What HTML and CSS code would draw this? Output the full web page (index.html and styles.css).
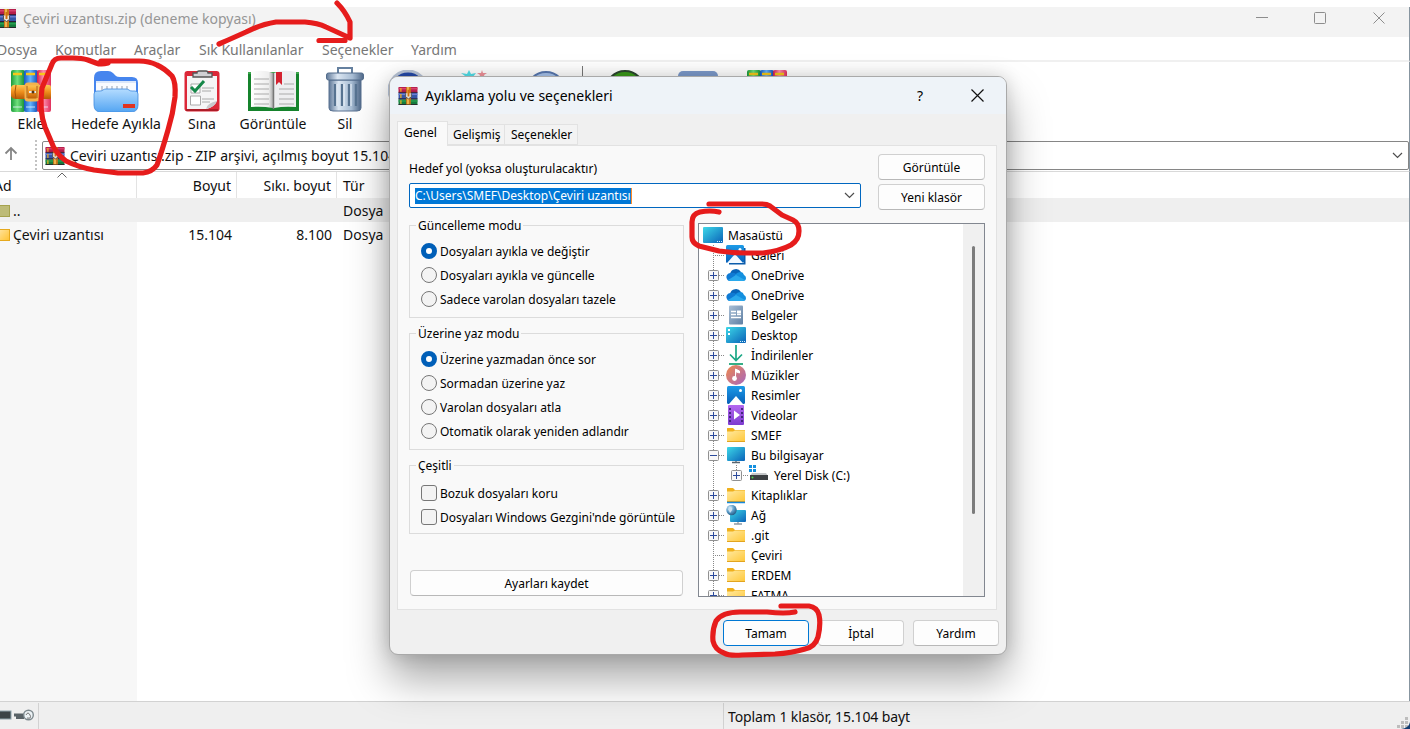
FILE: index.html
```
<!DOCTYPE html>
<html lang="tr">
<head>
<meta charset="utf-8">
<title>Çeviri uzantısı.zip</title>
<link rel="stylesheet" href="styles.css">
</head>
<body>
<svg class="defs" width="0" height="0">
  <defs>
    <linearGradient id="gDesk" x1="0" y1="0" x2="1" y2="1"><stop offset="0" stop-color="#3dd8e8"/><stop offset="1" stop-color="#0a62b8"/></linearGradient>
    <linearGradient id="gFold" x1="0" y1="0" x2="1" y2="1"><stop offset="0" stop-color="#ffe9a0"/><stop offset="1" stop-color="#ffc83a"/></linearGradient>
    <linearGradient id="gBlue" x1="0" y1="0" x2="0" y2="1"><stop offset="0" stop-color="#1c9be8"/><stop offset="1" stop-color="#0860b8"/></linearGradient>
    <linearGradient id="gMusic" x1="0" y1="0" x2="1" y2="1"><stop offset="0" stop-color="#f0884a"/><stop offset="1" stop-color="#a667c0"/></linearGradient>
    <linearGradient id="gVid" x1="0" y1="0" x2="0" y2="1"><stop offset="0" stop-color="#b468f0"/><stop offset="1" stop-color="#7d3cd0"/></linearGradient>
    <linearGradient id="gDoc" x1="0" y1="0" x2="1" y2="1"><stop offset="0" stop-color="#a8bfd6"/><stop offset="1" stop-color="#5f7fa3"/></linearGradient>
    <linearGradient id="gBelt" x1="0" y1="0" x2="0" y2="1"><stop offset="0" stop-color="#ffca55"/><stop offset=".5" stop-color="#ee8e1c"/><stop offset="1" stop-color="#b85a08"/></linearGradient>
    <linearGradient id="gG" x1="0" y1="0" x2="1" y2="0"><stop offset="0" stop-color="#1c9a3a"/><stop offset=".45" stop-color="#6fe07c"/><stop offset="1" stop-color="#128a30"/></linearGradient>
    <linearGradient id="gB" x1="0" y1="0" x2="1" y2="0"><stop offset="0" stop-color="#1558c0"/><stop offset=".45" stop-color="#63b4ff"/><stop offset="1" stop-color="#124ab0"/></linearGradient>
    <linearGradient id="gR" x1="0" y1="0" x2="1" y2="0"><stop offset="0" stop-color="#d51e4a"/><stop offset=".45" stop-color="#ff8fae"/><stop offset="1" stop-color="#e0305c"/></linearGradient>
    <linearGradient id="gHf" x1="0" y1="0" x2="0" y2="1"><stop offset="0" stop-color="#b4dcff"/><stop offset="1" stop-color="#54a5f2"/></linearGradient>
    <linearGradient id="gBin" x1="0" y1="0" x2="1" y2="0"><stop offset="0" stop-color="#5f7898"/><stop offset=".3" stop-color="#dbe6f2"/><stop offset=".7" stop-color="#a8bdd4"/><stop offset="1" stop-color="#4f6888"/></linearGradient>
    <linearGradient id="gPage" x1="0" y1="0" x2="1" y2="0"><stop offset="0" stop-color="#fff"/><stop offset=".8" stop-color="#eee"/><stop offset="1" stop-color="#aaa"/></linearGradient>
    <radialGradient id="gGlobe" cx=".35" cy=".3" r=".8"><stop offset="0" stop-color="#d8ecfa"/><stop offset=".5" stop-color="#5b9cc8"/><stop offset="1" stop-color="#1b5078"/></radialGradient>
  </defs>
  <symbol id="rar" viewBox="0 0 20 19">
    <rect width="20" height="6" fill="#b51f4c"/><rect y="1" width="20" height="1.5" fill="#d8406c"/>
    <rect y="6" width="20" height="7" fill="#3556a8"/><rect y="7" width="20" height="1.5" fill="#6c7fd0"/>
    <rect y="13" width="20" height="6" fill="#157a3c"/><rect y="14" width="20" height="1.5" fill="#28a050"/>
    <path d="M0 5.7h20M0 12.5h20M0 18.6h20" stroke="#2c1428" stroke-width=".9"/>
    <path d="M2.5 1v4M2.5 7.5v4M2.5 14v4" stroke="#f0b020" stroke-width="1.3"/>
    <rect x="8" width="5" height="18.5" fill="#c87818"/><rect x="9" y="0" width="2" height="18" fill="#f0b44c"/>
    <path d="M7.5 6.5v4l3 2 3-2v-4" fill="#e9e4dc" stroke="#555" stroke-width="1"/><path d="M10.5 3v7" stroke="#d07010" stroke-width="2"/>
  </symbol>
  <symbol id="books" viewBox="0 0 40 42">
    <rect width="14" height="42" rx="2" fill="url(#gG)"/><rect x="13" width="14" height="42" rx="2" fill="url(#gB)"/><rect x="26" width="14" height="42" rx="2" fill="url(#gR)"/>
    <path d="M2 4h9M15 4h9M28 4h9" stroke="#f8c818" stroke-width="2.6"/><path d="M2 37h9M15 37h9M28 37h9" stroke="#e8f4ff" stroke-opacity=".4" stroke-width="2"/>
    <path d="M0 17q2-3 5-2h33q2 0 2 2v11q0 1-2 1H5q-4 0-5-3z" fill="url(#gBelt)"/><path d="M5 15q-2 7 0 14" stroke="#a85405" fill="none"/>
    <rect x="15" y="14" width="12" height="16" rx="2" fill="none" stroke="#f4b24c" stroke-width="3"/><path d="M16 16v12M26 16v12" stroke="#965010" stroke-width=".8"/>
    <path d="M18 22h7" stroke="#ececec" stroke-width="2"/><circle cx="22" cy="22" r="1.5" fill="#553010"/>
  </symbol>
  <symbol id="dest" viewBox="0 0 46 42">
    <path d="M1 8Q1 1 8 1h7q3 0 5 2l3 3q1 1 4 1h12q6 0 6 6v22H1z" fill="#4685ee"/><path d="M3 11h40v17H3z" fill="#f9fbff"/>
    <path d="M3 11h40v2H3z" fill="#dbe7fa"/><path d="M9 16v7M14 16v7M19 16v7M24 16v7M29 16v7M34 16v7" stroke="#b5bcc8" stroke-width="1.4"/>
    <path d="M1 24q0-3 3-3h3q2 0 3-1 1-1 3-1h20q2 0 3 1t3 1h3q3 0 3 3v11q0 7-7 7H8q-7 0-7-7z" fill="url(#gHf)" stroke="#3f8ae0" stroke-width=".8"/>
    <rect x="30" y="34" width="12" height="4" fill="#e13320"/>
  </symbol>
  <symbol id="clip" viewBox="0 0 36 42">
    <rect x=".5" y="1" width="35" height="40.5" rx="3" fill="#dc2838"/><path d="M2 40h32" stroke="#9e1822" stroke-width="1.5"/>
    <path d="M3 6h30v25q-3 6-10 8H3z" fill="#f5f5f6"/><path d="M22 39q1-6 11-8-2 6-11 8" fill="#c8c8cc"/>
    <path d="M9 7V3h4q0-2 2-2h7q2 0 2 2h4v4z" fill="#d0d0d4" stroke="#555" stroke-width="1.3"/>
    <path d="M7 14h9v9H7zM6.500 26h10v9h-10z" fill="#fff" stroke="#aaa"/><path d="M7 17l4 4 9-10" fill="none" stroke="#16884a" stroke-width="3"/>
    <path d="M18 18h12M18 21h9M18 29h12M18 32h8" stroke="#aaa"/>
  </symbol>
  <symbol id="book" viewBox="0 0 51 42">
    <path d="M0 2h51v39H0z" fill="#15832c"/><path d="M0 2h51v2H0z" fill="#3da64d"/>
    <path d="M3 2q12-3 22 1v35q-11-2-22-1z" fill="url(#gPage)"/><path d="M26 3q10-4 22-1v35q-12-1-22 1z" fill="#eeeef0"/><path d="M25.500 3v36" stroke="#777" stroke-width="1.5"/>
    <path d="M6 9h15M6 14h15M6 19h15M6 24h15M6 29h15M6 34h15M31 19h15M31 24h15M31 29h15M31 34h15M36 14h10" stroke="#aaa"/>
    <path d="M28 2h6v13l-3-3-3 3z" fill="#d42230"/>
  </symbol>
  <symbol id="bin" viewBox="0 0 38 45">
    <path d="M12 6V1h14v5" fill="none" stroke="#65809f" stroke-width="2"/><path d="M3 13h32v28q0 3-4 3H7q-4 0-4-3z" fill="url(#gBin)" stroke="#587090"/>
    <path d="M9 17v22M16 17v22M23 17v22M30 17v22" stroke="#577391" stroke-width="2.300"/><path d="M11 17v22M18 17v22M25 17v22" stroke="#f0f6fc" stroke-width="1"/>
    <rect x=".5" y="6" width="37" height="7" rx="2" fill="url(#gBin)" stroke="#536d8c"/>
  </symbol>
  <symbol id="plus" viewBox="0 0 11 11"><rect x=".5" y=".5" width="10" height="10" rx="1" fill="#f8f8f8" stroke="#919191"/><path d="M2 5.500h7M5.500 2v7" stroke="#2b4a9b"/></symbol>
  <symbol id="minus" viewBox="0 0 11 11"><rect x=".5" y=".5" width="10" height="10" rx="1" fill="#f8f8f8" stroke="#919191"/><path d="M2 5.500h7" stroke="#2b4a9b"/></symbol>
  <symbol id="root" viewBox="0 0 20 20"><rect y="2" width="20" height="16" rx="1" fill="url(#gDesk)"/><path d="M14 16.500h1M16 16.500h1M18 16.500h1" stroke="#d6f0ff"/></symbol>
  <symbol id="desk" viewBox="0 0 20 20"><rect y="2" width="20" height="16" rx="1" fill="url(#gDesk)"/><path d="M2 4h2v2H2zM2 8h2v2H2z" fill="#fff"/><path d="M14 16.500h1M16 16.500h1M18 16.500h1" stroke="#d6f0ff"/></symbol>
  <symbol id="gal" viewBox="0 0 20 20"><path d="M18 3h1.500v16.500H3V18h15z" fill="#0b5cab"/><rect width="18" height="18" rx="1.500" fill="url(#gBlue)"/><path d="M1 18l8-9 8 9z" fill="#f2f9ff"/><circle cx="14" cy="4.500" r="1.500" fill="#fff"/></symbol>
  <symbol id="cloud" viewBox="0 0 20 20"><path d="M4 9a6 6 0 0 1 11-2l-3 6z" fill="#0864b8"/><path d="M1 14a4 4 0 0 1 4-6q3-1 5 1l4 3-9 4H3q-2-1-2-2" fill="#0f7ad4"/><path d="M9 10q2-3 6-3 2 0 3 3 2 1 2 3 0 3-3 3h-8z" fill="#1490df"/><path d="M2 15l8-5 9 5q-1 1-3 1H5q-2 0-3-1" fill="#2aa9ec"/></symbol>
  <symbol id="doc" viewBox="0 0 20 20"><rect x="3" y=".5" width="14" height="19" rx="1" fill="url(#gDoc)"/><path d="M5 6.500h5M5 9.500h5M5 12.500h10M11 9.500h4" stroke="#fff" stroke-width="1.400"/><rect x="11" y="5.500" width="4" height="3" fill="#fff"/></symbol>
  <symbol id="down" viewBox="0 0 20 20"><path d="M10 0v15M4 9.500l6 6 6-6" fill="none" stroke="#1ca886" stroke-width="1.700"/><path d="M3 19h14" stroke="#12a071" stroke-width="1.700"/></symbol>
  <symbol id="music" viewBox="0 0 20 20"><circle cx="10" cy="10" r="10" fill="url(#gMusic)"/><path d="M9.500 13V4l4 2v2l-3-1" fill="#fff" stroke="#fff"/><circle cx="8.500" cy="13.500" r="2.400" fill="#fff"/></symbol>
  <symbol id="pic" viewBox="0 0 20 20"><rect x="1" y="1" width="18" height="18" rx="1.500" fill="url(#gBlue)"/><path d="M3 19l7-8 7 8z" fill="#fff"/><circle cx="14.500" cy="5.500" r="1.500" fill="#fff"/></symbol>
  <symbol id="video" viewBox="0 0 20 20"><rect x="2" y="0" width="16" height="20" rx="1" fill="url(#gVid)"/><path d="M4 3v15M16 3v15" stroke="#35206b" stroke-width="1.700" stroke-dasharray="2 2"/><path d="M8 5.500l6 4.500-6 4.500z" fill="#fff"/></symbol>
  <symbol id="fold" viewBox="0 0 20 20"><path d="M1 3.500q0-.5.5-.5H7l2 2h10v11H1z" fill="#efb01c"/><path d="M1 6.500h6l2-1h10v11H1z" fill="url(#gFold)"/><path d="M1 16.500h18" stroke="#e2a420"/></symbol>
  <symbol id="lib" viewBox="0 0 20 20"><use href="#fold"/><path d="M1 17.500h18" stroke="#1689dc" stroke-width="1.500"/></symbol>
  <symbol id="pc" viewBox="0 0 20 20"><rect x="1" y="2" width="18" height="14" rx="1" fill="url(#gDesk)"/><path d="M10 16v1.500M6 17.500h8" stroke="#58656f" stroke-width="1.300"/></symbol>
  <symbol id="disk" viewBox="0 0 20 20"><path d="M0 0h3v3H0zM4 0h3v3H4zM0 4h3v3H0zM4 4h3v3H4z" fill="#1490df"/><path d="M3 8h14l2 3H1z" fill="#c4c7c9"/><rect x="1" y="10" width="18" height="5" fill="#3c4043"/><circle cx="3.500" cy="12.500" r="1" fill="#4dd84a"/></symbol>
  <symbol id="net" viewBox="0 0 20 20"><rect x="4" y="5" width="16" height="12" rx="1" fill="url(#gDesk)"/><path d="M12 17v2M8 19h8" stroke="#8b98a4" stroke-width="1.300"/><circle cx="5.500" cy="5" r="5.200" fill="url(#gGlobe)"/><path d="M2 4q3-3 4-1t-2 5" fill="#c9e1f2"/></symbol>
</svg>

<div class="window">
  <header class="titlebar">
    <svg class="title-icon" width="20" height="19"><use href="#rar"/></svg>
    <span class="title">Çeviri uzantısı.zip (deneme kopyası)</span>
    <svg class="caption" width="160" height="14" viewBox="0 0 160 14" fill="none" stroke="#8d8d8d"><path d="M2 6.500h12"/><rect x="60.500" y="1.500" width="11" height="11" rx="1"/><path d="M119.500 1.500l11 11M130.500 1.500l-11 11"/></svg>
  </header>
  <nav class="menu"><span class="m1">Dosya</span><span class="m2">Komutlar</span><span class="m3">Araçlar</span><span class="m4">Sık Kullanılanlar</span><span class="m5">Seçenekler</span><span class="m6">Yardım</span></nav>
  <div class="toolbar">
    <div class="tool w-add"><svg width="40" height="42"><use href="#books"/></svg><span>Ekle</span></div>
    <div class="tool w-dest"><svg width="46" height="42"><use href="#dest"/></svg><span>Hedefe Ayıkla</span></div>
    <div class="tool w-test"><svg width="36" height="42"><use href="#clip"/></svg><span>Sına</span></div>
    <div class="tool w-view"><svg width="51" height="42"><use href="#book"/></svg><span>Görüntüle</span></div>
    <div class="tool w-del"><svg class="bin" width="38" height="45"><use href="#bin"/></svg><span>Sil</span></div>
    <div class="tool w-find"><svg width="40" height="42" viewBox="0 0 40 42"><circle cx="20" cy="20" r="19" fill="#2449a8" stroke="#b9c5d8" stroke-width="3"/></svg></div>
    <div class="tool w-wiz"><svg width="40" height="42" viewBox="0 0 40 42"><path d="M10 0l2 4 5-1-3 4 2 4-6-2-5 2 1-5-4-3 6 1z" fill="#52e0ea"/><path d="M23 0l1 3 4 0-3 2 1 3-3-2-3 2 1-3-3-2h4z" fill="#f0929b"/></svg></div>
    <div class="tool w-info"><svg width="40" height="42" viewBox="0 0 40 42"><circle cx="20" cy="21" r="19" fill="#a8c4ec" stroke="#5878b0" stroke-width="2"/></svg></div>
    <div class="tool-sep"></div>
    <div class="tool w-virus"><svg width="40" height="42" viewBox="0 0 40 42"><circle cx="20" cy="20" r="19" fill="#3a9a1a" stroke="#2c4630" stroke-width="2"/></svg></div>
    <div class="tool w-comment"><svg width="40" height="42" viewBox="0 0 40 42"><rect y="1" width="40" height="34" rx="5" fill="#7c9acb"/></svg></div>
    <div class="tool w-sfx"><svg width="40" height="42"><use href="#books"/></svg></div>
  </div>
  <div class="address">
    <svg class="up" width="16" height="16" viewBox="0 0 16 16"><path d="M8 14V2M2.500 7.500L8 2l5.500 5.500" fill="none" stroke="#858585" stroke-width="1.800"/></svg>
    <div class="grip"></div>
    <div class="path"><svg width="20" height="18"><use href="#rar"/></svg><span>Çeviri uzantısı.zip - ZIP arşivi, açılmış boyut 15.104 bayt</span>
      <svg class="chev" width="11" height="7" viewBox="0 0 11 7"><path d="M1 1l4.500 4.500L10 1" fill="none" stroke="#4d4d4d" stroke-width="1.200"/></svg></div>
  </div>
  <main class="list">
    <div class="row head"><span class="name">Ad<svg class="sort" width="10" height="6" viewBox="0 0 10 6"><path d="M.5 5.500L5 1l4.500 4.500" fill="none" stroke="#666"/></svg></span><span class="size">Boyut</span><span class="packed">Sıkı. boyut</span><span class="type">Tür</span></div>
    <div class="row parent"><span class="name"><i class="ficon old"></i>..</span><span class="size"></span><span class="packed"></span><span class="type">Dosya</span></div>
    <div class="row"><span class="name"><i class="ficon"></i>Çeviri uzantısı</span><span class="size">15.104</span><span class="packed">8.100</span><span class="type">Dosya</span></div>
    <div class="rest"></div>
  </main>
  <footer class="status">
    <div class="cell lock"><svg width="36" height="14" viewBox="0 0 36 14"><rect x="-1" y="3" width="12" height="8" fill="#3b4448" stroke="#8fa4ad"/><path d="M14 7h10M16 9.500h8" stroke="#596267" stroke-width="3"/><circle cx="28.500" cy="7" r="4.800" fill="#edf3f6" stroke="#7d898e" stroke-width="1.400"/><path d="M26 7q2-4 4 0t-3 3" fill="none" stroke="#777"/></svg></div>
    <div class="cell msg"></div>
    <div class="cell total">Toplam 1 klasör, 15.104 bayt</div>
    <svg class="resize" width="14" height="12" viewBox="0 0 14 12"><path d="M9 0h3v3H9zM5 4h3v3H5zM9 4h3v3H9zM1 8h3v3H1zM5 8h3v3H5zM9 8h3v3H9z" fill="#bdbdbd"/><path d="M14 5q-1 6-9 7h9z" fill="#123c70"/></svg>
  </footer>
</div>

<section class="dialog">
  <header class="dlg-title"><svg width="20" height="18"><use href="#rar"/></svg><span>Ayıklama yolu ve seçenekleri</span><b>?</b><svg class="close" width="13" height="13" viewBox="0 0 13 13"><path d="M.5.5l12 12M12.500.5l-12 12" stroke="#111" stroke-width="1.200"/></svg></header>
  <div class="tabs"><span class="tab on">Genel</span><span class="tab t2">Gelişmiş</span><span class="tab t3">Seçenekler</span></div>
  <div class="page">
    <div class="dest-row">
      <div class="dest"><label>Hedef yol (yoksa oluşturulacaktır)</label>
        <div class="combo"><span class="sel">C:\Users\SMEF\Desktop\Çeviri uzantısı</span><svg width="11" height="7" viewBox="0 0 11 7"><path d="M1 1l4.500 4.500L10 1" fill="none" stroke="#4d4d4d" stroke-width="1.200"/></svg></div></div>
      <div class="side"><button>Görüntüle</button><button>Yeni klasör</button></div>
    </div>
    <div class="columns">
      <div class="options">
        <fieldset class="g1"><legend>Güncelleme modu</legend>
          <label class="opt"><i class="radio on"></i>Dosyaları ayıkla ve değiştir</label><label class="opt"><i class="radio"></i>Dosyaları ayıkla ve güncelle</label><label class="opt"><i class="radio"></i>Sadece varolan dosyaları tazele</label></fieldset>
        <fieldset class="g2"><legend>Üzerine yaz modu</legend>
          <label class="opt"><i class="radio on"></i>Üzerine yazmadan önce sor</label><label class="opt"><i class="radio"></i>Sormadan üzerine yaz</label><label class="opt"><i class="radio"></i>Varolan dosyaları atla</label><label class="opt"><i class="radio"></i>Otomatik olarak yeniden adlandır</label></fieldset>
        <fieldset class="g3"><legend>Çeşitli</legend>
          <label class="opt"><i class="check"></i>Bozuk dosyaları koru</label><label class="opt"><i class="check"></i>Dosyaları Windows Gezgini'nde görüntüle</label></fieldset>
        <button class="save">Ayarları kaydet</button>
      </div>
      <div class="tree">
        <div class="nodes">
          <div class="node top"><svg class="ni"><use href="#root"/></svg>Masaüstü</div>
          <div class="node"><i class="ex"></i><svg class="ni"><use href="#gal"/></svg>Galeri</div>
          <div class="node"><svg class="ex"><use href="#plus"/></svg><svg class="ni"><use href="#cloud"/></svg>OneDrive</div>
          <div class="node"><svg class="ex"><use href="#plus"/></svg><svg class="ni"><use href="#cloud"/></svg>OneDrive</div>
          <div class="node"><svg class="ex"><use href="#plus"/></svg><svg class="ni"><use href="#doc"/></svg>Belgeler</div>
          <div class="node"><svg class="ex"><use href="#plus"/></svg><svg class="ni"><use href="#desk"/></svg>Desktop</div>
          <div class="node"><svg class="ex"><use href="#plus"/></svg><svg class="ni"><use href="#down"/></svg>İndirilenler</div>
          <div class="node"><svg class="ex"><use href="#plus"/></svg><svg class="ni"><use href="#music"/></svg>Müzikler</div>
          <div class="node"><svg class="ex"><use href="#plus"/></svg><svg class="ni"><use href="#pic"/></svg>Resimler</div>
          <div class="node"><svg class="ex"><use href="#plus"/></svg><svg class="ni"><use href="#video"/></svg>Videolar</div>
          <div class="node"><svg class="ex"><use href="#plus"/></svg><svg class="ni"><use href="#fold"/></svg>SMEF</div>
          <div class="node"><svg class="ex"><use href="#minus"/></svg><svg class="ni"><use href="#pc"/></svg>Bu bilgisayar</div>
          <div class="node deep"><svg class="ex"><use href="#plus"/></svg><svg class="ni"><use href="#disk"/></svg>Yerel Disk (C:)</div>
          <div class="node"><svg class="ex"><use href="#plus"/></svg><svg class="ni"><use href="#lib"/></svg>Kitaplıklar</div>
          <div class="node"><svg class="ex"><use href="#plus"/></svg><svg class="ni"><use href="#net"/></svg>Ağ</div>
          <div class="node"><svg class="ex"><use href="#plus"/></svg><svg class="ni"><use href="#fold"/></svg>.git</div>
          <div class="node"><i class="ex"></i><svg class="ni"><use href="#fold"/></svg>Çeviri</div>
          <div class="node"><svg class="ex"><use href="#plus"/></svg><svg class="ni"><use href="#fold"/></svg>ERDEM</div>
          <div class="node"><svg class="ex"><use href="#plus"/></svg><svg class="ni"><use href="#fold"/></svg>FATMA</div>
        </div>
        <div class="scroll"><i></i></div>
      </div>
    </div>
  </div>
  <div class="actions"><button class="ok">Tamam</button><button>İptal</button><button>Yardım</button></div>
</section>

<svg class="ink" width="1410" height="729" viewBox="0 0 1410 729" fill="none" stroke="#e61c1c" stroke-width="5.200" stroke-linecap="round" stroke-linejoin="round">
  <path d="M219 44Q235 37 246 32Q262 24 276 22H305Q318 23 326 27L350 38M337 3Q345 11 350 22V38M319 40.500H345"/>
  <path d="M108 63Q101 65 96 63L88 60Q82 58 73 58H61Q54 58 52 64Q47 76 42 88Q39 111 45 127L51 141Q55 153 66 161Q78 167 94 170L118 173H143Q152 172 157 165Q162 151 168 130Q173 114 175 97Q176 82 172 76Q164 68 157 65Q149 61 139 61H101"/>
  <path d="M719 212Q710 210 700 212Q692 214 692 222V237Q692 243 699 246L719 251Q733 253 746 253H763Q780 251 791 245Q799 240 799 231Q799 223 793 220L782 215L770 206Q767 204 762 204H709"/>
  <path d="M795 612Q785 614 767 612H740Q722 612 716 621Q712 630 713 641Q715 650 724 653Q729 656 742 655L775 654Q792 653 805 649Q815 647 818 637Q821 624 819 615Q817 607 809 606H781"/>
</svg>
</body>
</html>
```
FILE: styles.css
```
* { box-sizing: border-box; }
body { margin: 0; width: 1410px; height: 729px; overflow: hidden; position: relative; background: #fff; font-family: "Noto Sans", sans-serif; font-size: 14px; color: #111; }
.defs { position: absolute; }
span, label, button, legend, .node, .cell { white-space: nowrap; }
svg { flex: none; }
.window { width: 1410px; height: 729px; padding-top: 7px; display: flex; flex-direction: column; }

.titlebar { height: 30px; flex: none; background: #f3f3f3; display: flex; align-items: flex-start; border-right: 1px solid #8795a0; color: #969696; line-height: 24px; }
.title-icon { margin: 2px 7px 0 -4px; }
.caption { margin: 4px 0 0 auto; margin-right: -5px; }
.menu { height: 25px; flex: none; border-bottom: 2px solid #f0f0f0; display: flex; line-height: 25px; color: #777; border-right: 1px solid #8795a0; }
.m1 { width: 58px; margin-left: -3px; }
.m2 { width: 79px; }
.m3 { width: 65px; }
.m4 { width: 123px; }
.m5 { width: 89px; }

.toolbar { height: 79px; flex: none; display: flex; padding-top: 8px; border-right: 1px solid #8795a0; }
.tool { display: flex; flex-direction: column; align-items: center; height: 66px; flex: none; }
.tool span { line-height: 20px; margin-top: 2px; }
.tool .bin { margin-top: -3px; }
.w-add { width: 62px; }
.w-dest { width: 108px; }
.w-test { width: 64px; }
.w-view { width: 78px; }
.w-del { width: 66px; }
.w-find { width: 60px; }
.w-wiz { width: 82px; }
.w-info { width: 52px; }
.tool-sep { width: 1px; height: 60px; background: #777; margin: -4px 12px 0 10px; }
.w-virus { width: 60px; }
.w-comment { width: 86px; }
.w-sfx { width: 52px; }

.address { height: 31px; flex: none; display: flex; border-bottom: 1px solid #d9d9d9; border-right: 1px solid #8795a0; }
.up { margin: 5px 0 0 3px; }
.grip { width: 2px; height: 30px; margin: -1px 5px 0 16px; background: repeating-linear-gradient(#c3c3c3 0 2px, #fff 2px 4px); }
.path { flex: 1; height: 29px; border: 1px solid #868686; border-radius: 2px; display: flex; align-items: center; padding: 0 5px 0 2px; }
.path span { margin-left: 5px; }
.chev { margin-left: auto; }

.list { flex: 1; display: flex; flex-direction: column; border-right: 1px solid #8795a0; }
.row { height: 24px; flex: none; display: flex; line-height: 25px; }
.row.head { height: 26px; line-height: 27px; }
.name { width: 137px; padding-left: 13px; background: #f7f7f7; display: flex; position: relative; }
.head .name { padding-left: 0; background: none; border-right: 1px solid #e3e3e3; text-indent: -6px; }
.sort { position: absolute; left: 57px; top: 0; }
.parent, .parent .name { background: #efefef; }
.ficon { width: 10px; height: 12px; margin: 7px 3px 0 -13px; flex: none; background: linear-gradient(135deg, #ffe196, #ffc437); border: 1px solid #e6a91e; border-left: 0; }
.ficon.old { background: #bdbb77; border-color: #a5a24d; }
.size, .packed { text-align: right; padding-right: 5px; }
.size { width: 100px; }
.packed { width: 100px; }
.head .size, .head .packed { border-right: 1px solid #e3e3e3; }
.type { padding-left: 6px; }
.rest { flex: 1; width: 137px; background: #f7f7f7; }

.status { height: 28px; flex: none; background: #efefef; border-top: 1px solid #d2d2d2; display: flex; position: relative; }
.cell { height: 26px; margin-top: 1px; line-height: 28px; }
.lock { width: 39px; border-right: 1px solid #d2d2d2; padding-top: 5px; line-height: 0; }
.msg { width: 685px; border-right: 1px solid #d2d2d2; }
.total { padding-left: 4px; letter-spacing: -.1px; }
.resize { position: absolute; right: 0; bottom: 0; }

.dialog { position: absolute; left: 389px; top: 76px; width: 618px; height: 579px; border-radius: 9px; background: #f0f0f0; border: 1px solid #a9a9a9; box-shadow: 0 24px 42px rgba(0,0,0,.34), 0 0 18px rgba(0,0,0,.16); font-size: 12px; color: #000; display: flex; flex-direction: column; overflow: hidden; }
.dlg-title { height: 37px; flex: none; background: #eef3f8; display: flex; align-items: center; padding: 0 22px 0 8px; font-size: 14px; }
.dlg-title span { margin-left: 7px; }
.dlg-title b { margin: 0 48px 0 auto; font-weight: 400; }
.tabs { height: 31px; flex: none; display: flex; align-items: flex-end; padding-left: 7px; position: relative; z-index: 1; }
.tab { height: 21px; border: 1px solid #e2e2e2; border-left: 0; background: #f3f3f3; line-height: 20px; padding-left: 5px; }
.tab.on { width: 51px; height: 25px; margin-bottom: -1px; border: 1px solid #e2e2e2; border-bottom: 0; background: #f9f9f9; padding-left: 6px; line-height: 22px; }
.t2 { width: 57px; }
.t3 { width: 73px; padding-left: 6px; }
.page { width: 600px; height: 465px; margin-left: 7px; flex: none; background: #f9f9f9; border: 1px solid #e2e2e2; padding: 8px 11px 0; display: flex; flex-direction: column; }
.dest-row { display: flex; justify-content: space-between; height: 56px; flex: none; }
.dest > label { display: block; height: 29px; line-height: 30px; }
.combo { width: 452px; height: 25px; border: 1px solid #0067c0; border-radius: 2px; background: #fff; display: flex; align-items: center; justify-content: space-between; padding: 0 5px; }
.sel { background: #0078d7; color: #fff; line-height: 16px; height: 16px; border-right: 1px solid #ff8b28; }
.side { width: 107px; display: flex; flex-direction: column; gap: 4px; }
button { font: inherit; height: 26px; flex: none; padding: 0; color: #000; background: #fdfdfd; border: 1px solid #d0d0d0; border-bottom-color: #b8b8b8; border-radius: 4px; text-align: center; }
.columns { display: flex; justify-content: space-between; padding-top: 13px; }
.options { width: 275px; padding-top: 2px; display: flex; flex-direction: column; }
fieldset { margin: 0; padding: 0 0 0 11px; border: 1px solid #dcdcdc; position: relative; min-width: 0; }
legend { position: absolute; left: 6px; top: -9px; padding: 0 2px; line-height: 17px; background: #f9f9f9; }
.g1 { height: 93px; padding-top: 13px; }
.g2 { height: 117px; padding-top: 13px; margin-top: 15px; }
.g3 { height: 69px; padding-top: 15px; margin-top: 15px; }
.opt { height: 24px; display: flex; align-items: center; }
.radio, .check { width: 16px; height: 16px; margin-right: 3px; border: 1px solid #777; background: #f3f3f3; flex: none; }
.radio { border-radius: 50%; }
.radio.on { border: 5px solid #005fb8; background: #fff; }
.check { border-radius: 3px; }
.save { margin: 36px 1px 0; }
.tree { width: 287px; height: 374px; border: 1px solid #828790; background: #fff; display: flex; overflow: hidden; }
.nodes { flex: 1; padding-top: 1px; }
.node { height: 20px; display: flex; align-items: center; padding-left: 9px; background: repeating-linear-gradient(#888 0 1px, #fff 1px 2px) 14px 0 / 1px 20px no-repeat, repeating-linear-gradient(90deg, #888 0 1px, #fff 1px 2px) 14px 10px / 12px 1px no-repeat; }
.node.top { padding-left: 4px; background: none; }
.node.deep { padding-left: 32px; background: repeating-linear-gradient(#888 0 1px, #fff 1px 2px) 14px 0 / 1px 20px no-repeat, repeating-linear-gradient(#888 0 1px, #fff 1px 2px) 37px 0 / 1px 10px no-repeat, repeating-linear-gradient(90deg, #888 0 1px, #fff 1px 2px) 38px 10px / 12px 1px no-repeat; }
.ex { width: 11px; height: 11px; margin-right: 7px; flex: none; }
.ni { width: 20px; height: 20px; margin-right: 5px; }
.scroll { width: 21px; background: #f0f0f0; padding: 22px 0 0 9px; }
.scroll i { display: block; width: 3px; height: 268px; border-radius: 2px; background: #7c7c7c; }
.actions { display: flex; justify-content: flex-end; gap: 9px; padding: 10px 7px 0 0; }
.actions button { width: 86px; }
.actions .ok { border-color: #0078d4; }
.ink { position: absolute; left: 0; top: 0; }
```
